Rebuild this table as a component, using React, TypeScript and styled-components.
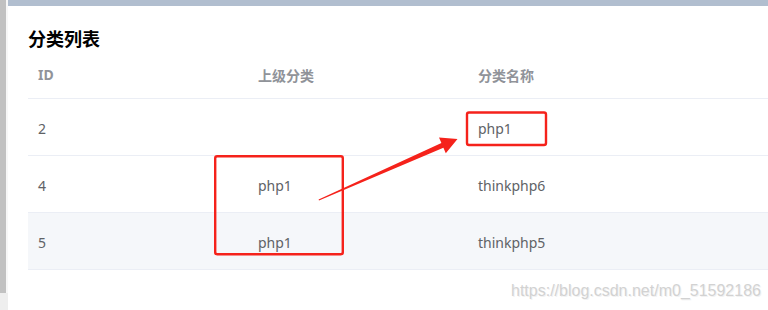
import styled, { createGlobalStyle } from 'styled-components';

const GlobalStyle = createGlobalStyle`
  html, body {
    margin: 0;
    padding: 0;
    background: #ffffff;
  }
  body {
    font-family: "Noto Sans", "Noto Sans CJK SC", sans-serif;
  }
`;

type Row = { id: string; parent: string; name: string; hovered?: boolean };

const rows: Row[] = [
  { id: '2', parent: '', name: 'php1' },
  { id: '4', parent: 'php1', name: 'thinkphp6' },
  { id: '5', parent: 'php1', name: 'thinkphp5', hovered: true },
];

const App = () => {
  return (
    <>
      <GlobalStyle />
      <Page>
        <Side>
          <SideTrack />
          <SideRest />
        </Side>
        <Main>
          <TopBar />
          <Content>
            <Title>分类列表</Title>
            <Table>
              <HeaderRow>
                <HeadCell>ID</HeadCell>
                <HeadCell>上级分类</HeadCell>
                <HeadCell>分类名称</HeadCell>
              </HeaderRow>
              {rows.map((row) => (
                <BodyRow key={row.id} $hovered={!!row.hovered}>
                  <Cell>{row.id}</Cell>
                  <Cell>{row.parent}</Cell>
                  <Cell>{row.name}</Cell>
                </BodyRow>
              ))}
            </Table>
          </Content>
        </Main>
        <Marks width="768" height="310" viewBox="0 0 768 310">
          <rect x="467" y="112.5" width="79" height="32.5" rx="2" fill="none" stroke="#f5221b" strokeWidth="2.4" />
          <rect x="215.2" y="156.2" width="127.6" height="98" rx="2" fill="none" stroke="#f5221b" strokeWidth="2.4" />
          <polygon
            points="319,200.6 443.4,147.7 445.8,153.2 457.5,139 439,137.6 441.4,143.1 318.6,199.4"
            fill="#f5221b"
          />
        </Marks>
        <Watermark>https://blog.csdn.net/m0_51592186</Watermark>
      </Page>
    </>
  );
};

export default App;

const Page = styled.div`
  position: relative;
  display: flex;
  width: 768px;
  height: 310px;
  overflow: hidden;
`;

const Side = styled.div`
  display: flex;
  flex-direction: column;
  width: 8px;
  flex-shrink: 0;
`;

const SideTrack = styled.div`
  height: 293px;
  background: #c1c1c1;
  border-right: 2px solid #f7f7f7;
`;

const SideRest = styled.div`
  flex: 1;
  background: #eeeeee;
`;

const Main = styled.div`
  flex: 1;
  display: flex;
  flex-direction: column;
`;

const TopBar = styled.div`
  height: 6px;
  background: #b1becf;
`;

const Content = styled.div`
  padding: 21px 0 0 20px;
`;

const Title = styled.h2`
  margin: 0;
  height: 24px;
  font-size: 18px;
  line-height: 24px;
  font-weight: 700;
  color: #000000;
`;

const Table = styled.div`
  display: flex;
  flex-direction: column;
`;

const HeaderRow = styled.div`
  display: grid;
  grid-template-columns: 220px 220px 1fr;
  height: 47px;
  align-items: center;
  border-bottom: 1px solid #ebeef5;
`;

const HeadCell = styled.div`
  padding-left: 10px;
  font-size: 14px;
  font-weight: 700;
  color: #909399;
`;

const BodyRow = styled.div<{ $hovered: boolean }>`
  display: grid;
  grid-template-columns: 220px 220px 1fr;
  height: 56px;
  align-items: center;
  border-bottom: 1px solid #ebeef5;
  background: ${(p) => (p.$hovered ? '#f5f7fa' : '#ffffff')};
`;

const Cell = styled.div`
  padding-left: 10px;
  padding-top: 2px;
  font-size: 14px;
  color: #606266;
`;

const Marks = styled.svg`
  position: absolute;
  left: 0;
  top: 0;
  pointer-events: none;
`;

const Watermark = styled.div`
  position: absolute;
  left: 511px;
  top: 281px;
  font-family: "Liberation Sans", Arial, sans-serif;
  font-size: 16px;
  line-height: 20px;
  color: #d2d2d2;
  text-shadow: 1px 1px 0 #f2f2f2;
  white-space: nowrap;
`;
